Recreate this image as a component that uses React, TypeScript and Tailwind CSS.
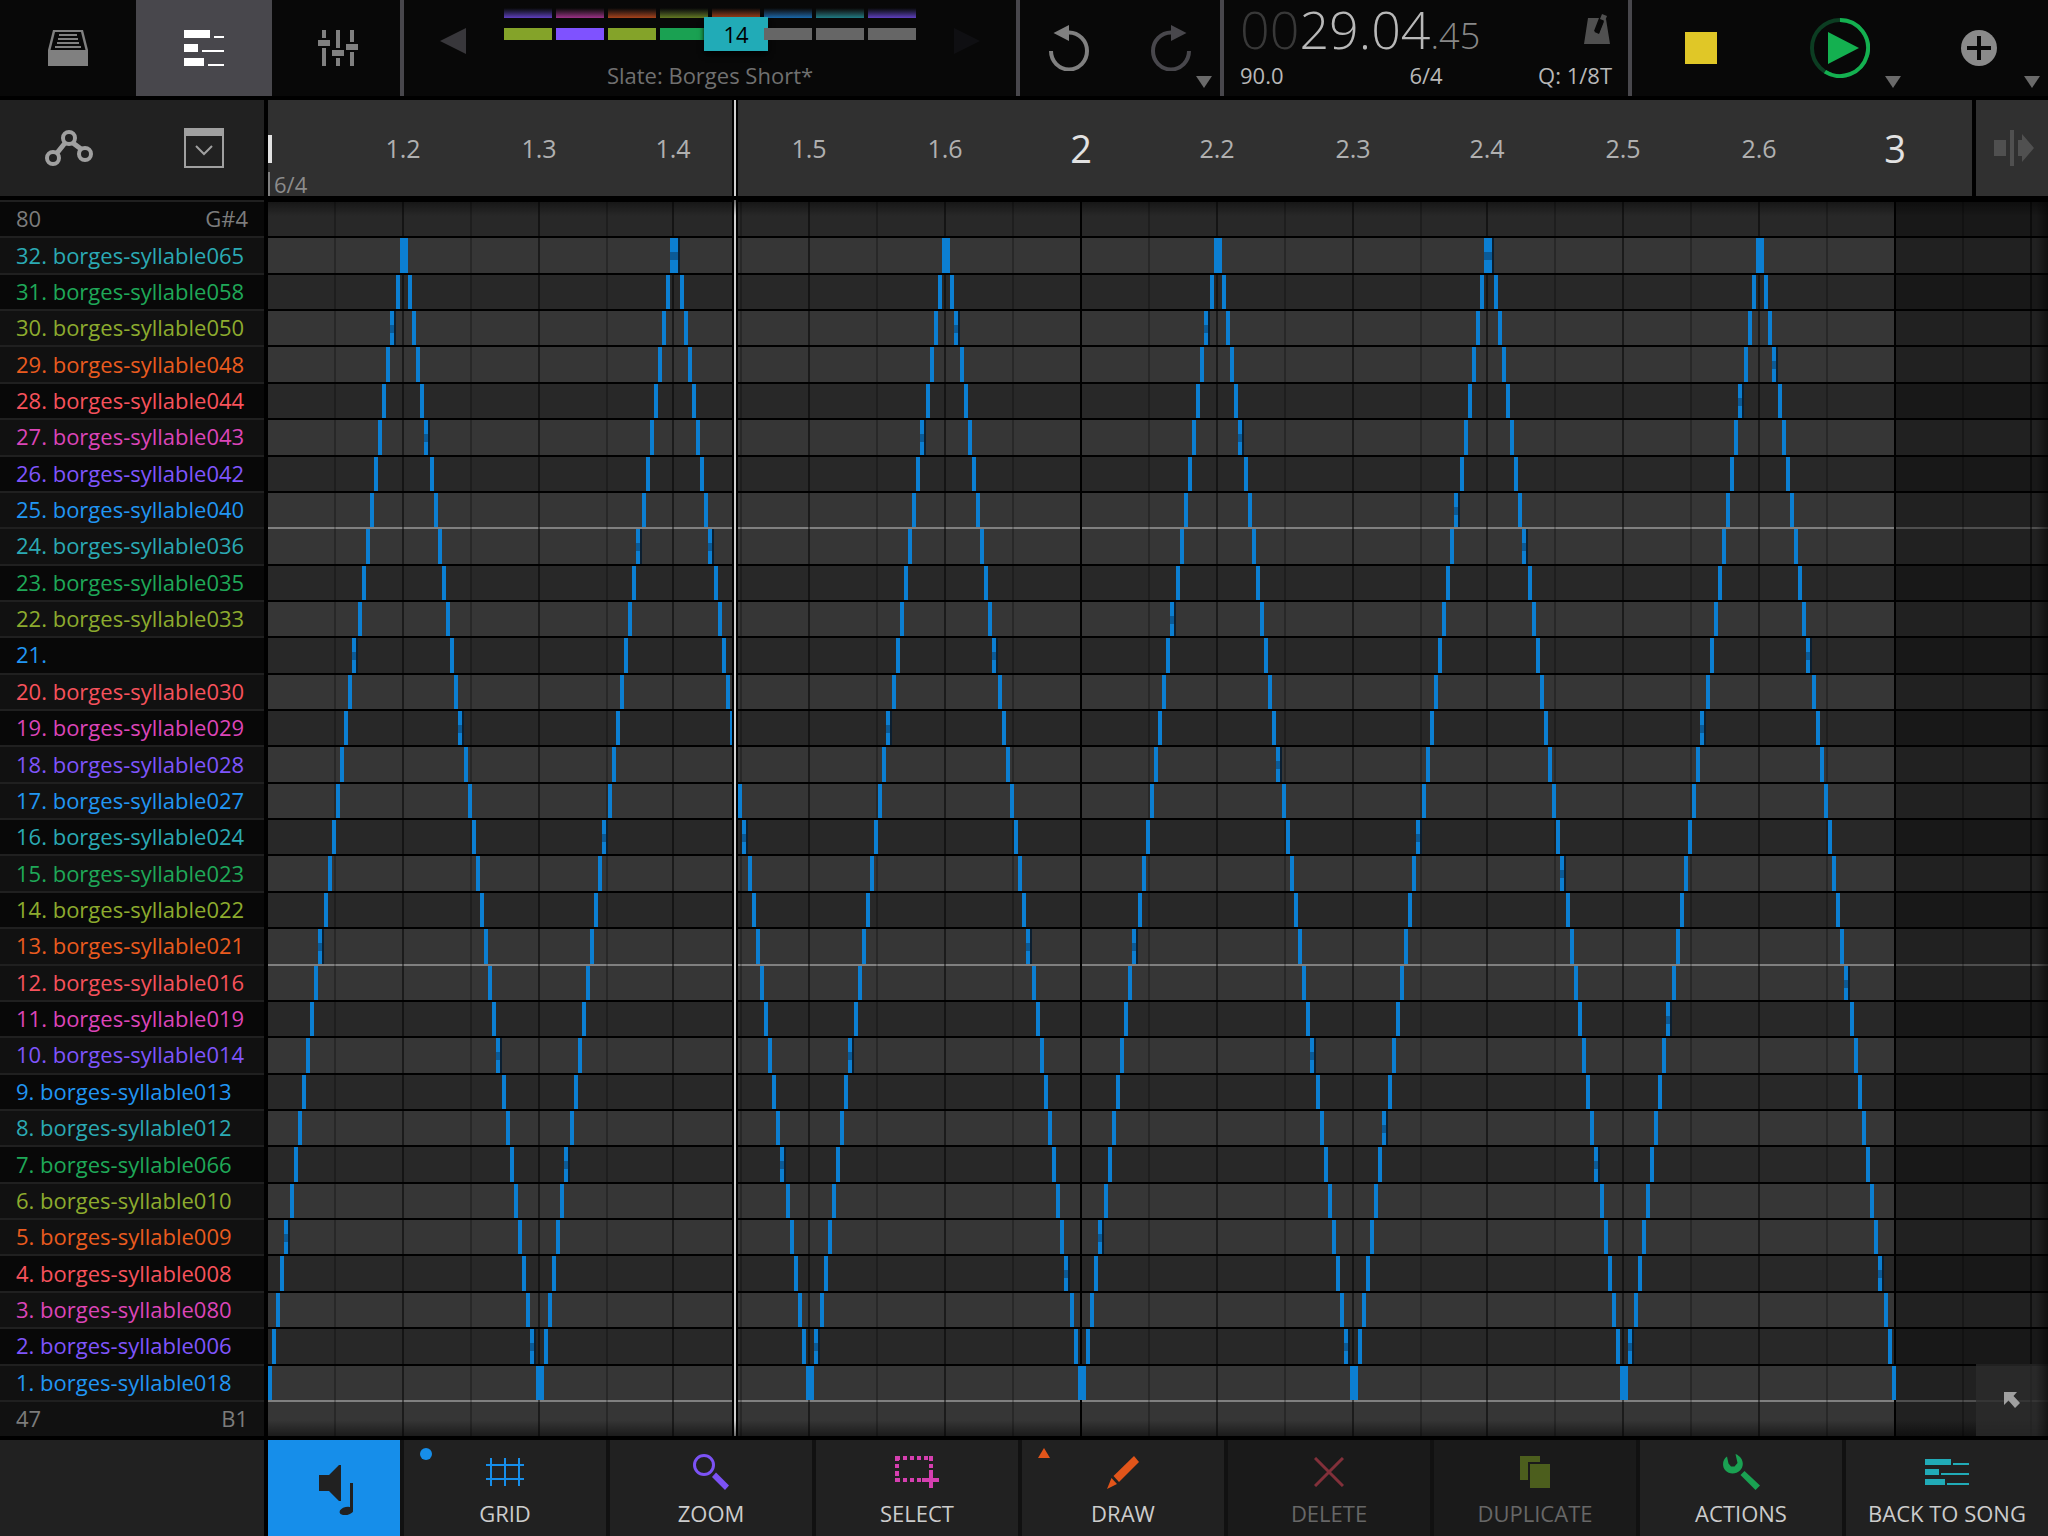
import React from "react";
import clsx from "clsx";

// zoom level of the note editor
const PX_PER_BEAT = 135.65;
const NOTE_OFFSET = 0.043;
const LOWEST_PITCH = 47;
const HIGHEST_PITCH = 80;
const BLACK_KEYS = [1, 3, 6, 8, 10];

const PAD_COLORS = [
  "text-[#2196f3]",
  "text-[#7f55fc]",
  "text-[#dc45b8]",
  "text-[#f7525c]",
  "text-[#ea5b1f]",
  "text-[#8dab2e]",
  "text-[#1fa858]",
  "text-[#2baab4]",
];

// pads 1 to 32, pad 21 is empty
const PAD_SAMPLES = [
  "018", "006", "080", "008", "009", "010", "066", "012",
  "013", "014", "019", "016", "021", "022", "023", "024",
  "027", "028", "029", "030", "", "033", "035", "036",
  "040", "042", "043", "044", "048", "050", "058", "065",
];

type Note = { pad: number; left: number; width: number; gap: boolean };

const snap = (x: number) => Math.round(x / 2) * 2;
const lineLeft = (beat: number) =>
  Math.floor((beat * PX_PER_BEAT - 1) / 2) * 2;

// every beat runs through all 32 pads, up and then down again
function buildNotes(): Note[] {
  const step = PX_PER_BEAT / 32;
  const notes: Note[] = [];
  for (let i = 0; i < 12 * 32; i++) {
    const beat = Math.floor(i / 32);
    const pad = beat % 2 === 0 ? (i % 32) + 1 : 32 - (i % 32);
    const left = snap(i * step + NOTE_OFFSET);
    const gap = snap((i + 1) * step + NOTE_OFFSET) - left > 4;
    const prev = notes[notes.length - 1];
    if (prev && prev.pad === pad) {
      prev.width += 4;
      prev.gap = gap;
    } else {
      notes.push({ pad, left, width: 4, gap });
    }
  }
  return notes;
}

const NOTES = buildNotes();

const PITCHES = Array.from(
  { length: HIGHEST_PITCH - LOWEST_PITCH + 1 },
  (_, i) => HIGHEST_PITCH - i
);

const isBlack = (pitch: number) => BLACK_KEYS.includes(pitch % 12);

const DropArrow = () => (
  <svg className="absolute right-2 bottom-2" width="16" height="12">
    <path d="M0 0H16L8 12Z" fill="#6a6a6a" />
  </svg>
);

const SongIcon = () => (
  <svg width="40" height="36" fill="#fff">
    <path d="M0 0H26V8H0ZM30 6H40V8H30ZM0 14H14V22H0ZM18 20H40V22H18ZM0 28H20V36H0ZM24 34H40V36H24Z" />
  </svg>
);

const TopTabs = () => (
  <nav className="flex shrink-0 border-r-4 border-[#48474c]">
    <button aria-label="Slate" className="flex w-[136px] items-center justify-center">
      <svg width="40" height="36" fill="#808080">
        <path d="M0 20L5 0H35L40 20V36H0ZM7 2L2.500 20H37.500L33 2Z" fillRule="evenodd" />
        <path d="M11 4H29V6H11ZM10 8H30V10H10ZM9 12H31V14H9ZM7 16H33V18H7Z" />
      </svg>
    </button>
    <button aria-label="Song" className="flex w-[136px] items-center justify-center bg-[#48474c]">
      <SongIcon />
    </button>
    <button aria-label="Mixer" className="flex w-32 items-center justify-center pl-1">
      <svg width="40" height="36" fill="#808080">
        <path d="M4 0H8V8H4ZM0 10H12V16H0ZM4 18H8V36H4ZM18 0H22V18H18ZM14 20H26V26H14ZM18 28H22V36H18ZM32 0H36V12H32ZM28 14H40V20H28ZM32 22H36V36H32Z" />
      </svg>
    </button>
  </nav>
);

const SlateSelector = () => {
  const upper = [
    "to-[#5f3fc0]",
    "to-[#9c3188]",
    "to-[#a8431a]",
    "to-[#637a22]",
    "to-[#a8431a]",
    "to-[#1868ab]",
    "to-[#1e7c84]",
    "to-[#5f3fc0]",
  ];
  const lower = [
    "bg-[#84a329]",
    "bg-[#7f52ff]",
    "bg-[#84a329]",
    "bg-[#1aa152]",
    "bg-[#21abb7]",
    "bg-[#666666]",
    "bg-[#666666]",
    "bg-[#666666]",
  ];
  return (
    <div className="flex flex-1 justify-between border-r-4 border-[#48474c] px-9">
      <button aria-label="Previous slate" className="mb-3.5">
        <svg width="26" height="26">
          <path d="M26 0V26L0 13Z" fill="#38373b" />
        </svg>
      </button>
      <div className="flex flex-col items-center">
        <div className="mt-2 grid grid-cols-[repeat(8,48px)] gap-x-1 gap-y-2.5">
          {upper.map((color, i) => (
            <div key={i} className={clsx("h-2.5 bg-linear-to-b from-[#080808]", color)} />
          ))}
          {lower.map((color, i) => (
            <div key={i} className={clsx("relative h-3", color)}>
              {i === 4 && (
                <button className="absolute -inset-x-2 -top-[11px] h-[34px] bg-[#21abb7] text-[22px] leading-[30px] text-black shadow-md shadow-black">
                  14
                </button>
              )}
            </div>
          ))}
        </div>
        <p className="mt-[19px] text-[22px] leading-8 text-[#707070]">Slate: Borges Short*</p>
      </div>
      <button aria-label="Next slate" className="mb-3.5">
        <svg width="26" height="26">
          <path d="M0 0V26L26 13Z" fill="#0f0f12" />
        </svg>
      </button>
    </div>
  );
};

const UndoIcon = ({ color }: { color: string }) => (
  <svg width="40" height="46" fill="none">
    <path d="M2 26A18 18.500 0 1 0 20 7.500" stroke={color} strokeWidth="4" />
    <path d="M4.500 8L20 0V16Z" fill={color} />
  </svg>
);

const History = () => (
  <div className="flex w-[204px] border-r-4 border-[#48474c]">
    <button aria-label="Undo" className="flex flex-1 items-center justify-center pr-1">
      <UndoIcon color="#808080" />
    </button>
    <button aria-label="Redo" className="relative flex flex-1 items-center justify-center">
      <span className="-scale-x-100">
        <UndoIcon color="#48474c" />
      </span>
      <DropArrow />
    </button>
  </div>
);

const Clock = () => (
  <div className="flex w-[408px] flex-col border-r-4 border-[#48474c] px-4 text-[#b8b8b8]">
    <div className="flex h-[59px] items-start justify-between">
      <div className="flex items-baseline text-[52px] leading-[58px] font-light">
        <span className="text-[#383838]">00</span>
        <span>29.04</span>
        <span className="text-[36px] text-[#888888]">.45</span>
      </div>
      <button aria-label="Metronome" className="mt-3.5 mr-0.5">
        <svg width="26" height="30" fill="#505050">
          <path d="M4 4H15L10 17L15 19L20 6L22 5L26 30H0Z" />
          <path d="M17.500 6.500L20 7.500L15 20L10.500 18Z" fill="#080808" />
          <path d="M18 0L23 2L21 7L16 5Z" />
        </svg>
      </button>
    </div>
    <div className="grid grid-cols-3 text-[22px] leading-8">
      <button className="text-left">90.0</button>
      <button>6/4</button>
      <button className="text-right">Q: 1/8T</button>
    </div>
  </div>
);

const Transport = () => (
  <div className="flex w-[416px]">
    <button aria-label="Stop" className="flex flex-1 items-center justify-center">
      <span className="size-8 bg-[#e0c727]" />
    </button>
    <button aria-label="Play" className="relative flex flex-1 items-center justify-center">
      <svg width="60" height="60" fill="none">
        <circle cx="30" cy="30" r="28" stroke="#0c3d22" strokeWidth="4" />
        <path d="M30 2A28 28 0 1 1 15 53.600" stroke="#14b050" strokeWidth="4" />
        <path d="M18 14L49 30L18 46Z" fill="#14b050" />
      </svg>
      <DropArrow />
    </button>
    <button aria-label="Add" className="relative flex flex-1 items-center justify-center">
      <svg width="36" height="36">
        <circle cx="18" cy="18" r="18" fill="#8a8a8a" />
        <path d="M6 18H30M18 6V30" stroke="#080808" strokeWidth="4" />
      </svg>
      <DropArrow />
    </button>
  </div>
);

const Playhead = () => (
  <div
    className="absolute inset-y-0 z-10 w-1.5 border-x-2 border-black bg-[#d0d0d0]"
    style={{ left: 464 }}
  />
);

const Ruler = () => (
  <div className="flex h-24 shrink-0 gap-1">
    <div className="flex w-66 items-center justify-between bg-[#212121] pr-10 pl-[45px]">
      <button aria-label="Automation">
        <svg width="48" height="36" fill="none" stroke="#a0a0a0" strokeWidth="4">
          <circle cx="24" cy="8" r="6" />
          <circle cx="8" cy="28" r="6" />
          <circle cx="40" cy="24" r="6" />
          <path d="M20 13L12 23M28 13L36 19" strokeWidth="5" />
        </svg>
      </button>
      <button aria-label="Show pads">
        <svg width="40" height="40" fill="none" stroke="#a0a0a0">
          <path d="M1 1H39V39H1Z" strokeWidth="2" />
          <path d="M0 0H40V8H0Z" fill="#a0a0a0" stroke="none" />
          <path d="M12 18L20 26L28 18" strokeWidth="2" />
        </svg>
      </button>
    </div>
    <div className="relative flex-1 bg-[#303030]">
      <div className="absolute top-[35px] left-0 h-7 w-1 bg-[#e2e2e2]" />
      {Array.from({ length: 12 }, (_, i) => i + 1).map((beat) => {
        const bar = Math.floor(beat / 6) + 1;
        const sub = (beat % 6) + 1;
        return (
          <span
            key={beat}
            className={clsx(
              "absolute inset-y-0 -translate-x-1/2 leading-[96px]",
              sub === 1 ? "text-[38px] text-[#e2e2e2]" : "text-[25px] text-[#b0b0b0]"
            )}
            style={{ left: lineLeft(beat) + 1 }}
          >
            {sub === 1 ? bar : `${bar}.${sub}`}
          </span>
        );
      })}
      <span className="absolute bottom-0 left-0 border-l-2 border-[#808080] pl-1 text-[22px] leading-6 text-[#8c8c8c]">
        6/4
      </span>
      <Playhead />
    </div>
    <button aria-label="Extend" className="flex w-18 items-center justify-center bg-[#303030] pl-1">
      <svg width="40" height="36" fill="#505050">
        <path d="M0 10H12V26H0ZM16 0H20V36H16ZM24 10H28V4L40 18L28 32V26H24Z" />
      </svg>
    </button>
  </div>
);

const KeyLabel = ({ pitch }: { pitch: number }) => {
  const pad = pitch - LOWEST_PITCH;
  const isPad = pad >= 1 && pad <= 32;
  const sample = PAD_SAMPLES[pad - 1];
  const color = pad === 21 ? PAD_COLORS[0] : PAD_COLORS[(pad - 1) % 8];
  return (
    <button
      className={clsx(
        "flex min-h-0 w-full flex-1 items-center justify-between border-t-2 border-[#202020] px-4 pb-0.5 text-[22px] leading-8",
        isBlack(pitch) ? "bg-[#080808]" : "bg-[#111111]",
        isPad ? color : "text-[#7c7c7c]"
      )}
    >
      {isPad ? (
        <span>
          {pad}. {sample && `borges-syllable${sample}`}
        </span>
      ) : (
        <>
          <span>{pitch}</span>
          <span>{pitch === 80 ? "G#4" : "B1"}</span>
        </>
      )}
    </button>
  );
};

const NoteRow = ({ pitch }: { pitch: number }) => {
  const pad = pitch - LOWEST_PITCH;
  return (
    <div
      className={clsx(
        "relative min-h-0 flex-1 border-t-2",
        isBlack(pitch) ? "bg-[#282828]" : "bg-[#363636]",
        pitch % 12 === 11 ? "border-[#808080]" : "border-black"
      )}
    >
      {NOTES.filter((n) => n.pad === pad).map((n) => (
        <div
          key={n.left}
          className="absolute inset-y-0 z-1 bg-[#0c7fd2]"
          style={{ left: n.left, width: n.width }}
        >
          {n.gap && (
            <>
              <div className="absolute inset-x-0 top-3.5 h-2 bg-[#0b5a96]" />
              <div className="absolute inset-y-0 left-full w-0.5 bg-[#0c1f30]" />
            </>
          )}
        </div>
      ))}
    </div>
  );
};

const PianoRoll = () => (
  <div className="relative flex flex-1 flex-col overflow-hidden">
    {PITCHES.map((pitch) => (
      <NoteRow key={pitch} pitch={pitch} />
    ))}
    {Array.from({ length: 26 }, (_, i) => (i + 1) / 2).map((beat) => (
      <div
        key={beat}
        className={clsx(
          "absolute inset-y-0 w-0.5",
          beat % 6 === 0 ? "bg-black" : beat % 1 === 0 ? "bg-black/50" : "bg-black/25"
        )}
        style={{ left: lineLeft(beat) }}
      />
    ))}
    <div
      className="absolute inset-y-0 right-0 bg-black/38"
      style={{ left: lineLeft(12) + 2 }}
    />
    <Playhead />
    <div className="absolute inset-x-0 top-0 z-10 h-4 bg-linear-to-b from-black/50 to-transparent" />
    <div className="absolute inset-x-0 bottom-0 z-10 h-4 bg-linear-to-t from-black/50 to-transparent" />
    <button
      aria-label="Fit view"
      className="absolute right-0 bottom-0 z-10 flex h-[72px] w-18 items-center justify-center bg-[#2c2c2c]/75"
    >
      <svg width="16" height="16" fill="#a0a0a0">
        <path d="M0 0H13L9.500 4L16 11L11 16L4.500 8.500L0 13Z" />
      </svg>
    </button>
    <div className="absolute inset-y-0 right-0 z-10 w-3 bg-linear-to-l from-black/50 to-transparent" />
  </div>
);

type Tool = {
  label: string;
  icon: React.ReactNode;
  badge?: React.ReactNode;
  disabled?: boolean;
};

const TOOLS: Tool[] = [
  {
    label: "GRID",
    badge: <span className="absolute top-2 left-4 size-3 rounded-full bg-[#168eea]" />,
    icon: (
      <svg width="38" height="28" stroke="#168eea" strokeWidth="2">
        <path d="M5 0V28M19 0V28M33 0V28M0 7H38M0 21H38" />
      </svg>
    ),
  },
  {
    label: "ZOOM",
    icon: (
      <svg width="36" height="36">
        <circle cx="11" cy="11" r="9.500" fill="none" stroke="#7c52f5" strokeWidth="3" />
        <path d="M19 23L23 18.500L36 31.500L32 36Z" fill="#7c52f5" />
      </svg>
    ),
  },
  {
    label: "SELECT",
    icon: (
      <svg width="44" height="32" fill="none" stroke="#d63fb0" strokeWidth="4">
        <path d="M0 2H38" strokeDasharray="5 3 4 3 4 3 4 3 4 3 5" />
        <path d="M0 24H28" strokeDasharray="5 3 4 3 4 3 4 3" />
        <path d="M2 0V26M36 0V12" strokeDasharray="5 3 4 3" />
        <path d="M27 24H44M36 14V32" />
      </svg>
    ),
  },
  {
    label: "DRAW",
    badge: (
      <svg className="absolute top-2 left-4" width="12" height="10">
        <path d="M6 0L12 10H0Z" fill="#e2551a" />
      </svg>
    ),
    icon: (
      <svg width="32" height="33" fill="#e2551a">
        <path d="M27 0L32 6L12 26L6.500 20Z" />
        <path d="M4.500 22L10 28L0 33Z" />
      </svg>
    ),
  },
  {
    label: "DELETE",
    disabled: true,
    icon: (
      <svg width="30" height="30" stroke="#82303a" strokeWidth="3">
        <path d="M1 1L29 29M29 1L1 29" />
      </svg>
    ),
  },
  {
    label: "DUPLICATE",
    disabled: true,
    icon: (
      <svg width="30" height="32" fill="#4c5e1d">
        <path d="M0 0H20V6H8V24H0Z" />
        <path d="M10 8H30V32H10Z" />
      </svg>
    ),
  },
  {
    label: "ACTIONS",
    icon: (
      <svg width="37" height="36" fill="#1aa152">
        <path d="M4 2.500C-1 6 -1 13 2.500 16.500C6 20.500 13 20.500 17 16.500C21.500 12 21 3.500 12.500 0L14.500 9L11.500 12.500H8L5.500 9.500Z" />
        <path d="M17.500 21L21.500 17L37 31.500L32.500 36Z" />
      </svg>
    ),
  },
  {
    label: "BACK TO SONG",
    icon: (
      <svg width="44" height="26" fill="#21abb7">
        <path d="M0 0H26V6H0ZM28 4H44V6H28ZM0 10H14V16H0ZM16 14H44V16H16ZM0 20H20V26H0ZM22 24H44V26H22Z" />
      </svg>
    ),
  },
];

const Toolbar = () => (
  <footer className="flex h-24 shrink-0 bg-[#111111]">
    <div className="w-67 shrink-0 border-r-4 border-black bg-[#212121]" />
    <button
      aria-label="Preview notes"
      className="mr-1 flex w-33 shrink-0 items-center justify-center bg-[#168eea] pt-1 pl-1"
    >
      <svg width="34" height="50" fill="#212121">
        <path d="M0 10H10L20 0H22V36H20L10 26H0Z" />
        <path d="M31 18H34V45H31Z" />
        <ellipse cx="27.500" cy="46" rx="7" ry="4" transform="rotate(-12 27.500 46)" />
      </svg>
    </button>
    <div className="grid flex-1 grid-cols-8 gap-1">
      {TOOLS.map((tool) => (
        <button
          key={tool.label}
          disabled={tool.disabled}
          className={clsx(
            "relative flex flex-col items-center text-[22px] leading-8 whitespace-nowrap",
            tool.disabled ? "bg-[#1a1a1a] text-[#676767]" : "bg-[#212121] text-[#cccccc]"
          )}
        >
          {tool.badge}
          <span className="mt-3 flex h-10 items-center">{tool.icon}</span>
          <span className="mt-[5px]">{tool.label}</span>
        </button>
      ))}
    </div>
  </footer>
);

const App: React.FC = () => {
  return (
    <div className="flex h-screen flex-col gap-1 overflow-hidden bg-black font-['Open_Sans','Noto_Sans',sans-serif]">
      <header className="flex h-24 shrink-0 bg-[#080808]">
        <TopTabs />
        <SlateSelector />
        <History />
        <Clock />
        <Transport />
      </header>
      <Ruler />
      <main className="flex min-h-0 flex-1 gap-1">
        <div className="flex w-66 flex-col">
          {PITCHES.map((pitch) => (
            <KeyLabel key={pitch} pitch={pitch} />
          ))}
        </div>
        <PianoRoll />
      </main>
      <Toolbar />
    </div>
  );
};

export default App;
